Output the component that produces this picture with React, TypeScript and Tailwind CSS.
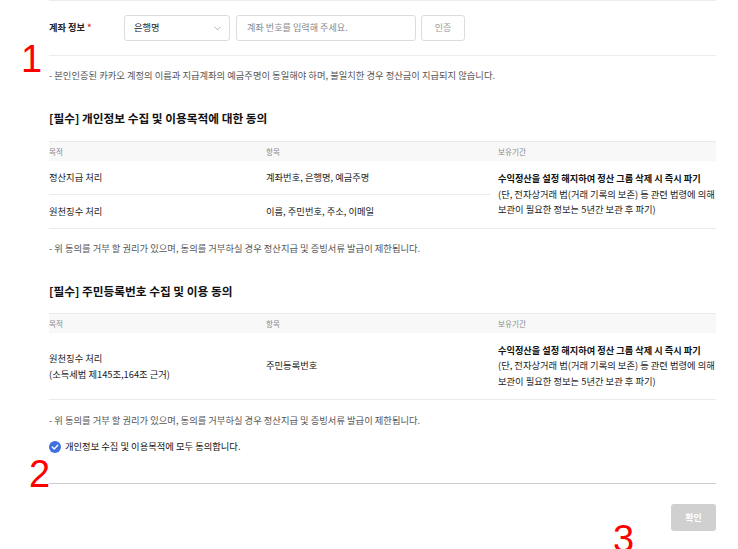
import React from "react";

const font = { fontFamily: '"Noto Sans CJK KR", "Noto Sans", sans-serif' };

function HeaderRow() {
  return (
    <div className="grid grid-cols-[217px_224px_226px] h-[20px] items-center bg-[#f8f8f8] border-t border-[#ebebeb] text-[7.6px] text-[#8a8a8a]">
      <div>목적</div>
      <div>항목</div>
      <div className="pl-[8px]">보유기간</div>
    </div>
  );
}

function Retention() {
  return (
    <div className="pl-[8px] flex flex-col justify-center text-[9.3px] leading-[15.5px] text-[#222] whitespace-nowrap">
      <div className="font-bold text-[#111] text-[9.2px]">수익정산을 설정 해지하여 정산 그룹 삭제 시 즉시 파기</div>
      <div>(단, 전자상거래 법(거래 기록의 보존) 등 관련 법령에 의해</div>
      <div>보관이 필요한 정보는 5년간 보관 후 파기)</div>
    </div>
  );
}

export default function App() {
  return (
    <div className="relative w-[738px] h-[549px] bg-white overflow-hidden" style={font}>
      <div className="ml-[49px] w-[667px]">
        {/* account row */}
        <div className="border-t border-[#ececec]">
          <div className="flex items-center py-[14px] border-b border-[#ececec]">
            <div className="w-[75px] text-[9.2px] font-bold text-[#222]">
              계좌 정보 <span className="text-[#e53935]">*</span>
            </div>
            <div className="w-[106px] h-[26px] border border-[#dcdcdc] rounded-[3px] flex items-center justify-between pl-[9px] pr-[8px]">
              <span className="text-[9.3px] text-[#222]">은행명</span>
              <svg width="7" height="5" viewBox="0 0 7 5">
                <path d="M0.5 0.8 L3.5 3.8 L6.5 0.8" fill="none" stroke="#a8a8a8" strokeWidth="0.9" />
              </svg>
            </div>
            <div className="ml-[6px] w-[180px] h-[26px] border border-[#dcdcdc] rounded-[3px] flex items-center pl-[10px]">
              <span className="text-[9.1px] text-[#888]">계좌 번호를 입력해 주세요.</span>
            </div>
            <div className="ml-[5px] w-[44px] h-[26px] border border-[#dcdcdc] rounded-[3px] flex items-center justify-center">
              <span className="text-[9px] text-[#999]">인증</span>
            </div>
          </div>
        </div>

        <p className="mt-[13px] text-[9.3px] leading-[13px] text-[#555] whitespace-nowrap">
          - 본인인증된 카카오 계정의 이름과 지급계좌의 예금주명이 동일해야 하며, 불일치한 경우 정산금이 지급되지 않습니다.
        </p>

        {/* section 1 */}
        <h2 className="mt-[28px] text-[11.7px] leading-[16px] font-bold text-[#111]">
          [필수] 개인정보 수집 및 이용목적에 대한 동의
        </h2>
        <div className="mt-[15px]">
          <HeaderRow />
          <div className="grid grid-cols-[217px_224px_226px] grid-rows-[34px_33px] border-b border-[#ebebeb] text-[9.3px] text-[#222]">
            <div className="flex items-center border-b border-[#ebebeb]">정산지급 처리</div>
            <div className="flex items-center border-b border-[#ebebeb]">계좌번호, 은행명, 예금주명</div>
            <div className="row-span-2 flex">
              <Retention />
            </div>
            <div className="flex items-center">원천징수 처리</div>
            <div className="flex items-center">이름, 주민번호, 주소, 이메일</div>
          </div>
        </div>
        <p className="mt-[13px] text-[9.3px] leading-[13px] text-[#555] whitespace-nowrap">
          - 위 동의를 거부 할 권리가 있으며, 동의를 거부하실 경우 정산지급 및 증빙서류 발급이 제한됩니다.
        </p>

        {/* section 2 */}
        <h2 className="mt-[28px] text-[11.7px] leading-[16px] font-bold text-[#111]">
          [필수] 주민등록번호 수집 및 이용 동의
        </h2>
        <div className="mt-[14px]">
          <HeaderRow />
          <div className="grid grid-cols-[217px_224px_226px] h-[67px] border-b border-[#ebebeb] text-[9.3px] text-[#222]">
            <div className="flex flex-col justify-center leading-[16px]">
              <div>원천징수 처리</div>
              <div>(소득세법 제145조,164조 근거)</div>
            </div>
            <div className="flex items-center">주민등록번호</div>
            <Retention />
          </div>
        </div>
        <p className="mt-[14px] text-[9.3px] leading-[13px] text-[#555] whitespace-nowrap">
          - 위 동의를 거부 할 권리가 있으며, 동의를 거부하실 경우 정산지급 및 증빙서류 발급이 제한됩니다.
        </p>

        <div className="mt-[13px] flex items-center h-[14px] gap-[4px]">
          <svg width="12" height="12" viewBox="0 0 12 12">
            <circle cx="6" cy="6" r="6" fill="#3e6fdf" />
            <path d="M3.3 6.1 L5.2 7.9 L8.7 4.3" fill="none" stroke="#fff" strokeWidth="1.4" strokeLinecap="round" strokeLinejoin="round" />
          </svg>
          <span className="text-[9.3px] text-[#111]">개인정보 수집 및 이용목적에 모두 동의합니다.</span>
        </div>

        <div className="mt-[29px] border-t border-[#cccccc]" />

        <div className="mt-[20px] flex justify-end">
          <div className="w-[45px] h-[27px] rounded-[3px] bg-[#d0d0d0] flex items-center justify-center">
            <span className="text-[9px] font-bold text-white">확인</span>
          </div>
        </div>
      </div>

      {/* annotations */}
      <span
        className="absolute left-[21px] top-[40px] text-[38px] leading-[38px] text-[#ff0000]"
        style={{ fontFamily: '"Liberation Sans", sans-serif' }}
      >
        1
      </span>
      <span
        className="absolute left-[29px] top-[455px] text-[38px] leading-[38px] text-[#ff0000]"
        style={{ fontFamily: '"Liberation Sans", sans-serif' }}
      >
        2
      </span>
      <span
        className="absolute left-[613px] top-[520px] text-[38px] leading-[38px] text-[#ff0000]"
        style={{ fontFamily: '"Liberation Sans", sans-serif' }}
      >
        3
      </span>
    </div>
  );
}
